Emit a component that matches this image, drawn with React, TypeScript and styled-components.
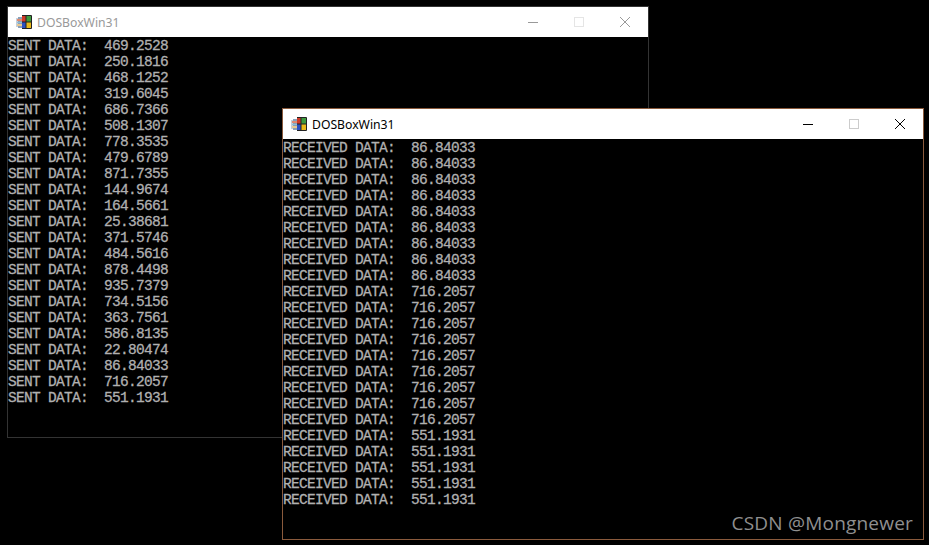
import styled, { createGlobalStyle } from "styled-components";

const GlobalStyle = createGlobalStyle`
  html, body {
    margin: 0;
    padding: 0;
    background: #000;
  }
`;

const Desktop = styled.div`
  position: relative;
  width: 929px;
  height: 545px;
  overflow: hidden;
  background: #000;
`;

const Win = styled.div<{ $x: number; $y: number; $w: number; $h: number; $active?: boolean }>`
  position: absolute;
  left: ${(p) => p.$x}px;
  top: ${(p) => p.$y}px;
  width: ${(p) => p.$w}px;
  height: ${(p) => p.$h}px;
  box-sizing: border-box;
  display: flex;
  flex-direction: column;
  background: #000;
  border: 1px solid ${(p) => (p.$active ? "#8a5a3c" : "#333333")};
`;

const TitleBar = styled.div`
  height: 30px;
  flex: none;
  display: flex;
  align-items: center;
  background: #fff;
  padding-left: 8px;
`;

const Title = styled.span<{ $active?: boolean }>`
  margin-left: 5px;
  font-family: "Noto Sans", "Open Sans", sans-serif;
  font-size: 12.2px;
  color: ${(p) => (p.$active ? "#000" : "#999")};
`;

const Controls = styled.div`
  margin-left: auto;
  display: flex;
  height: 100%;
`;

const Control = styled.div`
  width: 46px;
  display: flex;
  align-items: center;
  justify-content: center;
`;

const Console = styled.div`
  flex: 1;
  padding-top: 1px;
  font-family: "Liberation Mono", monospace;
  font-size: 14.5px;
  letter-spacing: -0.7px;
  line-height: 16px;
  -webkit-text-stroke: 0.3px #b0b0b0;
  color: #b0b0b0;
  white-space: pre;
`;

const Watermark = styled.div`
  position: absolute;
  right: 16px;
  bottom: 9px;
  font-family: "Open Sans", "Noto Sans", sans-serif;
  font-size: 19px;
  letter-spacing: 0.2px;
  color: #8f8f8f;
`;

const WinIcon = () => (
  <svg width="16" height="15" viewBox="0 0 16 15">
    <rect x="0" y="3" width="2" height="9" fill="#c4d0dc" />
    <rect x="2" y="2" width="4" height="11" fill="#8aa0b8" />
    <rect x="1" y="4" width="5" height="2" fill="#e08a70" />
    <rect x="1" y="7" width="5" height="1" fill="#8cc0d8" />
    <rect x="1" y="9" width="5" height="2" fill="#e8c890" />
    <rect x="6" y="1" width="4" height="6" fill="#d03a28" />
    <rect x="10" y="1" width="5" height="6" fill="#3c9a3c" />
    <rect x="6" y="7" width="4" height="6" fill="#2c50c0" />
    <rect x="10" y="7" width="5" height="6" fill="#e8b818" />
    <path d="M6 0.5h9.5v13H6M10 1v12M6 7h9" fill="none" stroke="#222" strokeWidth="1" />
  </svg>
);

const ControlIcons = ({ active }: { active?: boolean }) => (
  <Controls>
    <Control>
      <svg width="10" height="10" viewBox="0 0 10 10">
        <path d="M0 5.5h10" stroke={active ? "#000" : "#999"} />
      </svg>
    </Control>
    <Control>
      <svg width="10" height="10" viewBox="0 0 10 10">
        <rect x="0.5" y="0.5" width="9" height="9" fill="none" stroke={active ? "#ccc" : "#e5e5e5"} />
      </svg>
    </Control>
    <Control>
      <svg width="10" height="10" viewBox="0 0 10 10">
        <path d="M0 0l10 10M10 0L0 10" stroke={active ? "#000" : "#999"} />
      </svg>
    </Control>
  </Controls>
);

const sent = [
  "469.2528", "250.1816", "468.1252", "319.6045", "686.7366", "508.1307", "778.3535", "479.6789",
  "871.7355", "144.9674", "164.5661", "25.38681", "371.5746", "484.5616", "878.4498", "935.7379",
  "734.5156", "363.7561", "586.8135", "22.80474", "86.84033", "716.2057", "551.1931",
];

const received = [
  ...Array(9).fill("86.84033"),
  ...Array(9).fill("716.2057"),
  ...Array(5).fill("551.1931"),
];

export default function App() {
  return (
    <Desktop>
      <GlobalStyle />
      <Win $x={7} $y={6} $w={642} $h={432}>
        <TitleBar>
          <WinIcon />
          <Title>DOSBoxWin31</Title>
          <ControlIcons />
        </TitleBar>
        <Console>{sent.map((v) => `SENT DATA:  ${v}`).join("\n")}</Console>
      </Win>
      <Win $x={282} $y={108} $w={642} $h={432} $active>
        <TitleBar>
          <WinIcon />
          <Title $active>DOSBoxWin31</Title>
          <ControlIcons active />
        </TitleBar>
        <Console>{received.map((v) => `RECEIVED DATA:  ${v}`).join("\n")}</Console>
      </Win>
      <Watermark>CSDN @Mongnewer</Watermark>
    </Desktop>
  );
}
